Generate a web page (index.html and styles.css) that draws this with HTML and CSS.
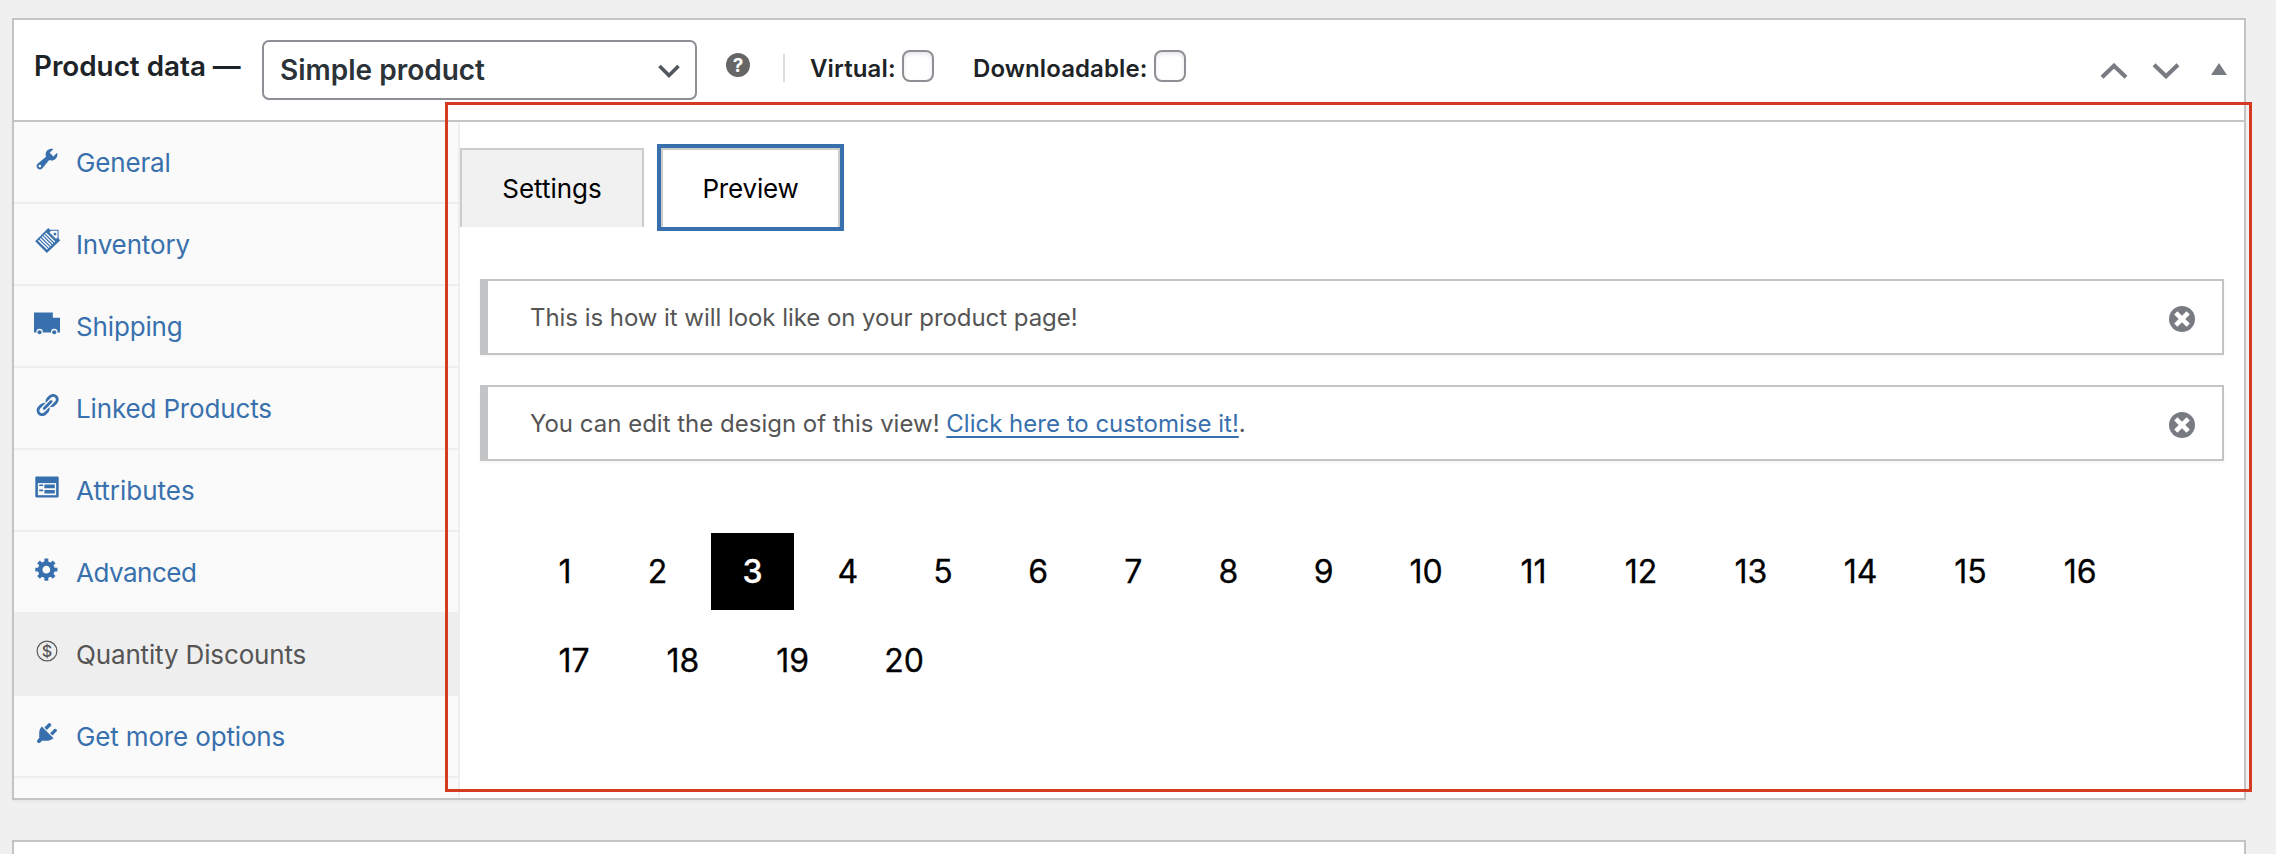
FILE: index.html
```html
<!DOCTYPE html>
<html lang="en">
<head>
<meta charset="utf-8">
<title>Product data</title>
<link rel="stylesheet" href="styles.css">
</head>
<body>
<section class="card">
  <header class="head">
    <h2 class="title">Product data —</h2>
    <div class="select"><span>Simple product</span>
      <svg class="chev" viewBox="0 0 24 16"><path d="M2.5 3 12 12.500 21.500 3" fill="none" stroke="#50575e" stroke-width="3.6"/></svg>
    </div>
    <svg class="help" viewBox="0 0 24 24"><circle cx="12" cy="12" r="12" fill="#666"/><text x="12" y="18.600" text-anchor="middle" class="help-mark">?</text></svg>
    <span class="divider"></span>
    <label class="check virtual"><span>Virtual:</span><i class="box"></i></label>
    <label class="check download"><span>Downloadable:</span><i class="box"></i></label>
    <div class="handles">
      <svg class="arrow" viewBox="0 0 28 16"><path d="M2 14.300 14 2.800 26 14.300" fill="none" stroke="#787c82" stroke-width="4.200"/></svg>
      <svg class="arrow" viewBox="0 0 28 16"><path d="M2 1.700 14 13.200 26 1.700" fill="none" stroke="#787c82" stroke-width="4.200"/></svg>
      <svg class="tri" viewBox="0 0 16 12"><path d="M8 0 16 12H0z" fill="#787c82"/></svg>
    </div>
  </header>
  <div class="body">
    <nav class="side">
      <a class="item"><svg class="ico" viewBox="0 0 20 20"><path d="M16.680 9.770c-1.340 1.340-3.300 1.670-4.950.99l-5.410 6.520c-.99.99-2.590.99-3.580 0s-.99-2.590 0-3.570l6.520-5.420c-.68-1.650-.35-3.610.99-4.950 1.280-1.280 3.120-1.620 4.720-1.060l-2.890 2.890 2.820 2.820 2.860-2.870c.53 1.580.18 3.390-1.080 4.650zM3.810 16.210c.4.39 1.040.39 1.430 0 .4-.4.4-1.040 0-1.430-.39-.4-1.030-.4-1.430 0-.39.39-.39 1.030 0 1.430z"/></svg><span class="tight">General</span></a>
      <a class="item"><svg class="ico" viewBox="0 0 20 20"><path d="M11 0 20.200 9.500 9.900 19.300.900 10.100z"/><path d="M9 3.800l7 7M7.600 5.200l7 7M6.200 6.600l7 7M4.800 8l7 7M3.400 9.400l7 7" stroke="#fafafa" stroke-width="1.050"/><path d="M12.700 1.800h5.800v5.800l-1.700 1.200-5.400-5.300z" fill="#fafafa" stroke="#3870ad" stroke-width=".8"/><circle cx="16.100" cy="4.700" r="1.100"/></svg><span class="tight">Inventory</span></a>
      <a class="item"><svg class="ico" viewBox="0 0 20 20"><path d="M0 2h14.500v4H20v11.300H0z"/><circle cx="4.300" cy="17" r="2.500" fill="#fafafa"/><circle cx="15.600" cy="17" r="2.500" fill="#fafafa"/><circle cx="4.300" cy="17.100" r="1.600"/><circle cx="15.600" cy="17.100" r="1.600"/></svg><span class="tight">Shipping</span></a>
      <a class="item"><svg class="ico" viewBox="0 0 20 20"><path d="M17.740 2.760c1.680 1.690 1.680 4.410 0 6.100l-1.530 1.520c-1.120 1.120-2.700 1.470-4.140 1.090l2.620-2.610.76-.77.76-.76c.84-.84.84-2.200 0-3.040-.84-.85-2.200-.85-3.040 0l-.77.76-3.380 3.380c-.37-1.440-.02-3.020 1.100-4.140l1.520-1.530c1.690-1.680 4.420-1.680 6.100 0zM8.590 13.430l5.340-5.340c.42-.42.42-1.100 0-1.520-.44-.43-1.130-.39-1.530 0l-5.330 5.340c-.42.42-.42 1.100 0 1.520.44.43 1.130.39 1.520 0zm-.76 2.290l4.140-4.150c.38 1.440.03 3.020-1.090 4.140l-1.520 1.530c-1.690 1.680-4.410 1.680-6.100 0-1.680-1.680-1.680-4.420 0-6.100l1.530-1.520c1.120-1.120 2.700-1.470 4.140-1.100l-4.140 4.150c-.85.84-.85 2.200 0 3.050.84.84 2.200.84 3.040 0z"/></svg><span class="tight">Linked Products</span></a>
      <a class="item"><svg class="ico" viewBox="0 0 20 20"><rect x="1" y="2" width="18" height="16" rx=".8"/><path fill="#fafafa" d="M3 7h14v9.300H3z"/><path d="M4 8h3v1.300H4zM4 12h3v1.300H4zM8 8h8v3H8zM8 12.300h8v2.700H8z"/></svg><span>Attributes</span></a>
      <a class="item"><svg class="ico" viewBox="0 0 20 20"><path d="M18 12h-2.180c-.17.7-.44 1.350-.81 1.930l1.540 1.540-2.100 2.100-1.540-1.540c-.58.36-1.230.63-1.910.79V19H8v-2.180c-.68-.16-1.330-.43-1.910-.79l-1.540 1.540-2.120-2.120 1.540-1.540c-.36-.58-.63-1.230-.79-1.910H1V9.030h2.170c.16-.7.44-1.350.8-1.940L2.430 5.550l2.100-2.100 1.540 1.540c.58-.37 1.240-.64 1.930-.81V2h3v2.180c.68.160 1.330.43 1.910.79l1.540-1.540 2.120 2.120-1.540 1.540c.36.59.64 1.240.8 1.940H18V12zm-8.500 1.500c1.660 0 3-1.340 3-3s-1.340-3-3-3-3 1.340-3 3 1.340 3 3 3z"/></svg><span class="tighter">Advanced</span></a>
      <a class="item active"><svg class="ico" viewBox="0 0 20 20"><circle cx="10" cy="10" r="7.600" fill="none" stroke="#555" stroke-width=".9"/><text x="10" y="14.400" text-anchor="middle" class="dollar">$</text></svg><span class="tight">Quantity Discounts</span></a>
      <a class="item"><svg class="ico" viewBox="0 0 20 20"><path d="M13.110 4.360L9.870 7.600 8 5.730l3.240-3.240c.35-.34 1.050-.2 1.560.32.52.51.66 1.210.31 1.550zm-8 1.770l.91-1.120 9.010 9.010-1.190.84c-.71.71-2.630 1.160-3.820 1.160H6.140L4.900 17.260c-.59.59-1.540.59-2.120 0-.59-.58-.59-1.530 0-2.120l1.240-1.240v-3.880c0-1.130.4-3.190 1.090-3.890zm7.260 3.970l3.240-3.240c.34-.35 1.040-.21 1.550.31.52.51.66 1.210.31 1.550l-3.240 3.250z"/></svg><span class="tight">Get more options</span></a>
    </nav>
    <main class="main">
      <div class="tabs"><button class="tab settings"><span>Settings</span></button><button class="tab preview"><span>Preview</span></button></div>
      <div class="notice"><p class="n1">This is how it will look like on your product page!</p>
        <svg class="close" viewBox="0 0 26 26"><circle cx="13" cy="13" r="13" fill="#787c82"/><path d="M6.800 6.800 19.200 19.200M19.200 6.800 6.800 19.200" stroke="#fff" stroke-width="4.600"/></svg></div>
      <div class="notice"><p>You can edit the design of this view! <a class="link">Click here to customise it!</a>.</p>
        <svg class="close" viewBox="0 0 26 26"><circle cx="13" cy="13" r="13" fill="#787c82"/><path d="M6.800 6.800 19.200 19.200M19.200 6.800 6.800 19.200" stroke="#fff" stroke-width="4.600"/></svg></div>
      <div class="nums">
        <span class="num one">1</span><span class="num">2</span><span class="num on">3</span><span class="num">4</span><span class="num">5</span><span class="num">6</span><span class="num">7</span><span class="num">8</span><span class="num">9</span><span class="num wide">10</span><span class="num eleven">11</span><span class="num wide">12</span><span class="num wide">13</span><span class="num wide">14</span><span class="num wide">15</span><span class="num wide">16</span><span class="num seventeen">17</span><span class="num wide">18</span><span class="num wide">19</span><span class="num twenty">20</span>
      </div>
    </main>
  </div>
</section>
<section class="card next"></section>
<div class="highlight"></div>
</body>
</html>
```
FILE: styles.css
```css
* { box-sizing: border-box; }
body {
  margin: 0; height: 854px; overflow: hidden; position: relative;
  padding: 18px 30px 0 12px; background: #f0f0f0;
  font-family: Inter, "Liberation Sans", sans-serif; font-size: 26px; color: #1d2327;
}
.card {
  height: 782px; background: #fff; border: 2px solid #c3c4c5;
  box-shadow: 0 2px 2px rgba(0, 0, 0, .04);
}
.next { margin-top: 40px; height: 14px; border-bottom: 0; box-shadow: none; }
.head {
  display: flex; align-items: flex-start; height: 102px;
  border-bottom: 2px solid #c3c4c5; padding: 20px 17px 0 20px;
}
.title { margin: 0; width: 228px; font-size: 27.8px; font-weight: 600; line-height: 52px; white-space: nowrap; }
.select {
  display: flex; align-items: center; justify-content: space-between;
  width: 435px; height: 60px; padding: 0 14px 0 16px;
  border: 2px solid #8c8f94; border-radius: 7px;
  font-size: 28px; font-weight: 600; color: #2c3338;
}
.chev { width: 24px; height: 16px; margin-top: 2px; }
.help { width: 24px; height: 24px; margin: 13px 0 0 29px; }
.help-mark { font: 700 19px Inter, sans-serif; fill: #fff; }
.divider { width: 2px; height: 28px; margin: 14px 0 0 33px; background: #ddd; }
.check { display: flex; font-size: 24px; font-weight: 600; line-height: 57px; white-space: nowrap; }
.virtual { margin-left: 25px; }
.virtual span { width: 92px; letter-spacing: .15px; }
.download { margin-left: 39px; }
.download span { width: 181px; letter-spacing: .1px; }
.box {
  width: 32px; height: 32px; margin-top: 10px; background: #fff;
  border: 2px solid #8c8f94; border-radius: 8px; box-shadow: inset 0 2px 4px rgba(0, 0, 0, .1);
}
.handles { display: flex; margin: 23px 0 0 auto; }
.arrow { width: 28px; height: 16px; margin-right: 24px; }
.tri { width: 16px; height: 12px; margin-left: 7px; }
.body { display: flex; height: 676px; }
.side { width: 446px; background: #fafafa; border-right: 2px solid #eee; }
.item {
  display: flex; align-items: center; gap: 16px; height: 82px; padding-left: 20px;
  border-bottom: 2px solid #eee; color: #3870ad; white-space: nowrap;
}
.active { background: #eee; color: #555; }
.tight { letter-spacing: -.15px; }
.tighter { letter-spacing: -.5px; }
.ico { width: 26px; height: 26px; margin-bottom: 6px; fill: currentColor; overflow: visible; }
.dollar { font: 500 12.500px Inter, sans-serif; }
.main { flex: 1; padding-top: 26px; }
.tabs { display: flex; gap: 17px; height: 79px; }
.tab {
  font: inherit; color: #000; padding: 0; border: 2px solid #ccc; border-bottom: 0;
  display: flex; align-items: center; justify-content: center;
}
.settings { width: 184px; background: #f1f1f1; }
.preview { width: 179px; background: #fff; outline: 4px solid #3870ad; letter-spacing: -.2px; }
.notice {
  display: flex; align-items: center; justify-content: space-between;
  height: 76px; margin: 30px 20px 0; padding: 0 27px 0 42px;
  border: 2px solid #c3c4c5; border-left-width: 8px;
  box-shadow: 0 2px 2px rgba(0, 0, 0, .04); font-size: 24px; color: #555;
}
.tabs + .notice { margin-top: 52px; }
.notice p { margin: 0; white-space: nowrap; }
.n1 { letter-spacing: -.05px; }
.close { width: 26px; height: 26px; margin-top: 4px; }
.link { color: #3870ad; text-decoration: underline; text-decoration-thickness: 2px; text-underline-offset: 4px; }
.nums { display: flex; flex-wrap: wrap; gap: 12px; width: 1640px; margin: 72px 0 0 66px; }
.num {
  width: 83.2px; height: 77px; font-size: 32px; line-height: 77px;
  text-align: center; color: #000; -webkit-text-stroke: .3px currentColor;
}
.one { width: 77.8px; }
.wide { width: 97.8px; }
.eleven { width: 93px; }
.seventeen { width: 96px; }
.twenty { width: 101px; }
.on { background: #000; color: #fff; font-weight: 500; }
.highlight {
  position: absolute; left: 445px; top: 102px; width: 1807px; height: 690px;
  border: 3px solid #d63a22; pointer-events: none;
}
```
